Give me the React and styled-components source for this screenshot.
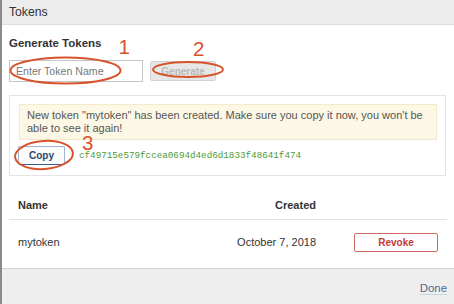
import React from "react";
import styled, { createGlobalStyle } from "styled-components";

const GlobalStyle = createGlobalStyle`
  html, body { margin: 0; padding: 0; background: #fff; }
  body { font-family: "Liberation Sans", Arial, sans-serif; color: #333; overflow: hidden; }
  * { box-sizing: border-box; }
`;

const Modal = styled.div`
  position: relative;
  width: 454px;
  height: 304px;
  border-left: 2px solid #8a8a8a;
  display: flex;
  flex-direction: column;
  background: #fff;
`;

const Header = styled.div`
  height: 25px;
  background: #ececec;
  border-bottom: 1px solid #dedede;
  padding-left: 7px;
  font-size: 12.2px;
  line-height: 24px;
  color: #333;
`;

const Body = styled.div`
  flex: 1;
  padding: 0 7px;
  display: flex;
  flex-direction: column;
`;

const SectionTitle = styled.div`
  margin-top: 11px;
  font-size: 11.5px;
  line-height: 14px;
  font-weight: bold;
  color: #333;
`;

const FormRow = styled.div`
  margin-top: 10px;
  display: flex;
  align-items: center;
  gap: 7px;
`;

const Input = styled.input`
  width: 134px;
  height: 22px;
  border: 1px solid #c6c6c6;
  padding: 0 6px;
  font-family: inherit;
  font-size: 10.6px;
  color: #333;
  outline: none;
  &::placeholder { color: #777; }
`;

const Button = styled.button`
  height: ${(p) => p.$h || 19}px;
  width: ${(p) => p.$w}px;
  padding: 0;
  font-family: inherit;
  font-size: 10px;
  font-weight: bold;
  background: ${(p) => p.$bg || "#fff"};
  color: ${(p) => p.$color};
  border: 1px solid ${(p) => p.$border};
  border-bottom-color: ${(p) => p.$borderBottom || p.$border};
  border-radius: 2px;
`;

const Panel = styled.div`
  margin-top: 13px;
  margin-right: 1px;
  border: 1px solid #e4e4e4;
  padding: 8px 8px 10px 9px;
`;

const Alert = styled.div`
  background: #fcf8e5;
  border: 1px solid #f3eacb;
  padding: 4px 3px 4px 7px;
  font-size: 11px;
  line-height: 13px;
  color: #555;
`;

const CopyRow = styled.div`
  margin-top: 6px;
  display: flex;
  align-items: center;
  gap: 14px;
  margin-left: -1px;
`;

const Hash = styled.span`
  font-family: "Liberation Mono", "DejaVu Sans Mono", monospace;
  font-size: 9.25px;
  color: #4e9a36;
`;

const TableRow = styled.div`
  display: grid;
  grid-template-columns: 1fr auto 122px;
  align-items: center;
  padding: ${(p) => p.$pad};
  border-bottom: ${(p) => (p.$line ? "1px solid #e3e3e3" : "none")};
  font-size: 11px;
  line-height: 13px;
  font-weight: ${(p) => (p.$head ? "bold" : "normal")};
  color: #333;
`;

const Table = styled.div`
  margin-top: 14px;
`;

const RightCell = styled.div`
  text-align: right;
`;

const EndCell = styled.div`
  justify-self: end;
  display: flex;
`;

const Footer = styled.div`
  height: 36px;
  background: #eeeeee;
  border-top: 1px solid #d3d3d3;
  display: flex;
  justify-content: flex-end;
  padding: 12px 7px 0 0;
`;

const DoneLink = styled.span`
  font-size: 11.4px;
  line-height: 14px;
  color: #4b6a93;
  text-decoration: underline;
  text-decoration-color: #c9d4e2;
  text-underline-offset: 2px;
`;

const Annotations = styled.svg`
  position: absolute;
  left: -2px;
  top: 0;
  width: 454px;
  height: 304px;
  pointer-events: none;
  overflow: visible;
`;

const Num = styled.text`
  font-family: "Liberation Sans", Arial, sans-serif;
  font-size: 20.5px;
  fill: #d8532d;
`;

export default function App() {
  const red = "#d8532d";
  return (
    <>
      <GlobalStyle />
      <Modal>
        <Header>Tokens</Header>
        <Body>
          <SectionTitle>Generate Tokens</SectionTitle>
          <FormRow>
            <Input placeholder="Enter Token Name" />
            <Button $w={66} $h={20} $bg="#e7e7e7" $color="#b9b9b9" $border="#d2d2d2" disabled>
              Generate
            </Button>
          </FormRow>
          <Panel>
            <Alert>
              New token "mytoken" has been created. Make sure you copy it now, you won't be able to see it again!
            </Alert>
            <CopyRow>
              <Button $w={47} $bg="#fbfbfb" $color="#2b4a70" $border="#9fb3cf" $borderBottom="#3d5f8d">
                Copy
              </Button>
              <Hash>cf49715e579fccea0694d4ed6d1833f48641f474</Hash>
            </CopyRow>
          </Panel>
          <Table>
            <TableRow $head $line $pad="9px 9px 7px">
              <div>Name</div>
              <RightCell>Created</RightCell>
              <div />
            </TableRow>
            <TableRow $pad="13px 9px 16px">
              <div>mytoken</div>
              <RightCell>October 7, 2018</RightCell>
              <EndCell>
                <Button $w={84} $bg="#fff" $color="#c43b34" $border="#d46a64">
                  Revoke
                </Button>
              </EndCell>
            </TableRow>
          </Table>
        </Body>
        <Footer>
          <DoneLink>Done</DoneLink>
        </Footer>
        <Annotations viewBox="0 0 454 304">
          <ellipse cx="65.5" cy="70.5" rx="55" ry="13" fill="none" stroke={red} strokeWidth="2" />
          <ellipse cx="188" cy="69.5" rx="35" ry="7.5" fill="none" stroke={red} strokeWidth="2" />
          <ellipse cx="44" cy="155" rx="29" ry="14" fill="none" stroke={red} strokeWidth="2" transform="rotate(-4 44 155)" />
          <Num x="118.5" y="54">1</Num>
          <Num x="193" y="56">2</Num>
          <Num x="82" y="150">3</Num>
        </Annotations>
      </Modal>
    </>
  );
}
